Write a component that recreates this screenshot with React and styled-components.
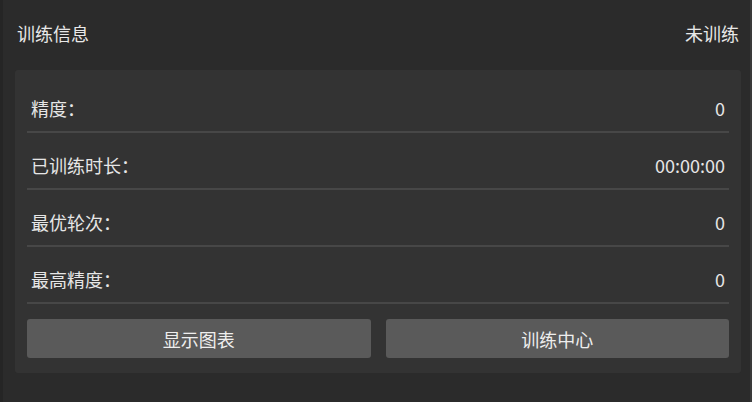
import styled, { createGlobalStyle } from "styled-components";

const GlobalStyle = createGlobalStyle`
  html, body {
    margin: 0;
    padding: 0;
    background: #2b2b2b;
  }
  * {
    box-sizing: border-box;
  }
`;

const Panel = styled.div`
  width: 752px;
  height: 402px;
  padding: 0 9px 0 12px;
  background: #2b2b2b;
  border-left: 3px solid #252525;
  border-right: 2px solid #3a3a3a;
  font-family: "Noto Sans CJK SC", "Noto Sans", sans-serif;
  color: #e8e8e8;
  display: flex;
  flex-direction: column;
`;

const Header = styled.div`
  height: 70px;
  padding: 0 2px 4px 2px;
  display: flex;
  align-items: center;
  justify-content: space-between;
  font-size: 18px;
`;

const Card = styled.div`
  background: #333333;
  border-radius: 3px;
  padding: 6px 12px 15px;
  display: flex;
  flex-direction: column;
`;

const Row = styled.div`
  height: 57px;
  padding: 8px 4px 0 4px;
  display: flex;
  align-items: center;
  justify-content: space-between;
  border-bottom: 2px solid #474747;
  font-size: 18px;
`;

const Label = styled.span`
  color: #e6e6e6;
`;

const Value = styled.span`
  color: #e6e6e6;
`;

const Actions = styled.div`
  margin-top: 15px;
  display: grid;
  grid-template-columns: 1fr 1fr;
  gap: 15px;
`;

const Button = styled.button`
  height: 39px;
  border: none;
  border-radius: 3px;
  background: #5a5a5a;
  color: #eeeeee;
  font-family: inherit;
  font-size: 18px;
  cursor: pointer;
  &:hover {
    background: #646464;
  }
`;

const stats = [
  { label: "精度：", value: "0" },
  { label: "已训练时长：", value: "00:00:00" },
  { label: "最优轮次：", value: "0" },
  { label: "最高精度：", value: "0" },
];

const App = () => {
  return (
    <>
      <GlobalStyle />
      <Panel>
        <Header>
          <span>训练信息</span>
          <span>未训练</span>
        </Header>
        <Card>
          {stats.map((s) => (
            <Row key={s.label}>
              <Label>{s.label}</Label>
              <Value>{s.value}</Value>
            </Row>
          ))}
          <Actions>
            <Button>显示图表</Button>
            <Button>训练中心</Button>
          </Actions>
        </Card>
      </Panel>
    </>
  );
};

export default App;
